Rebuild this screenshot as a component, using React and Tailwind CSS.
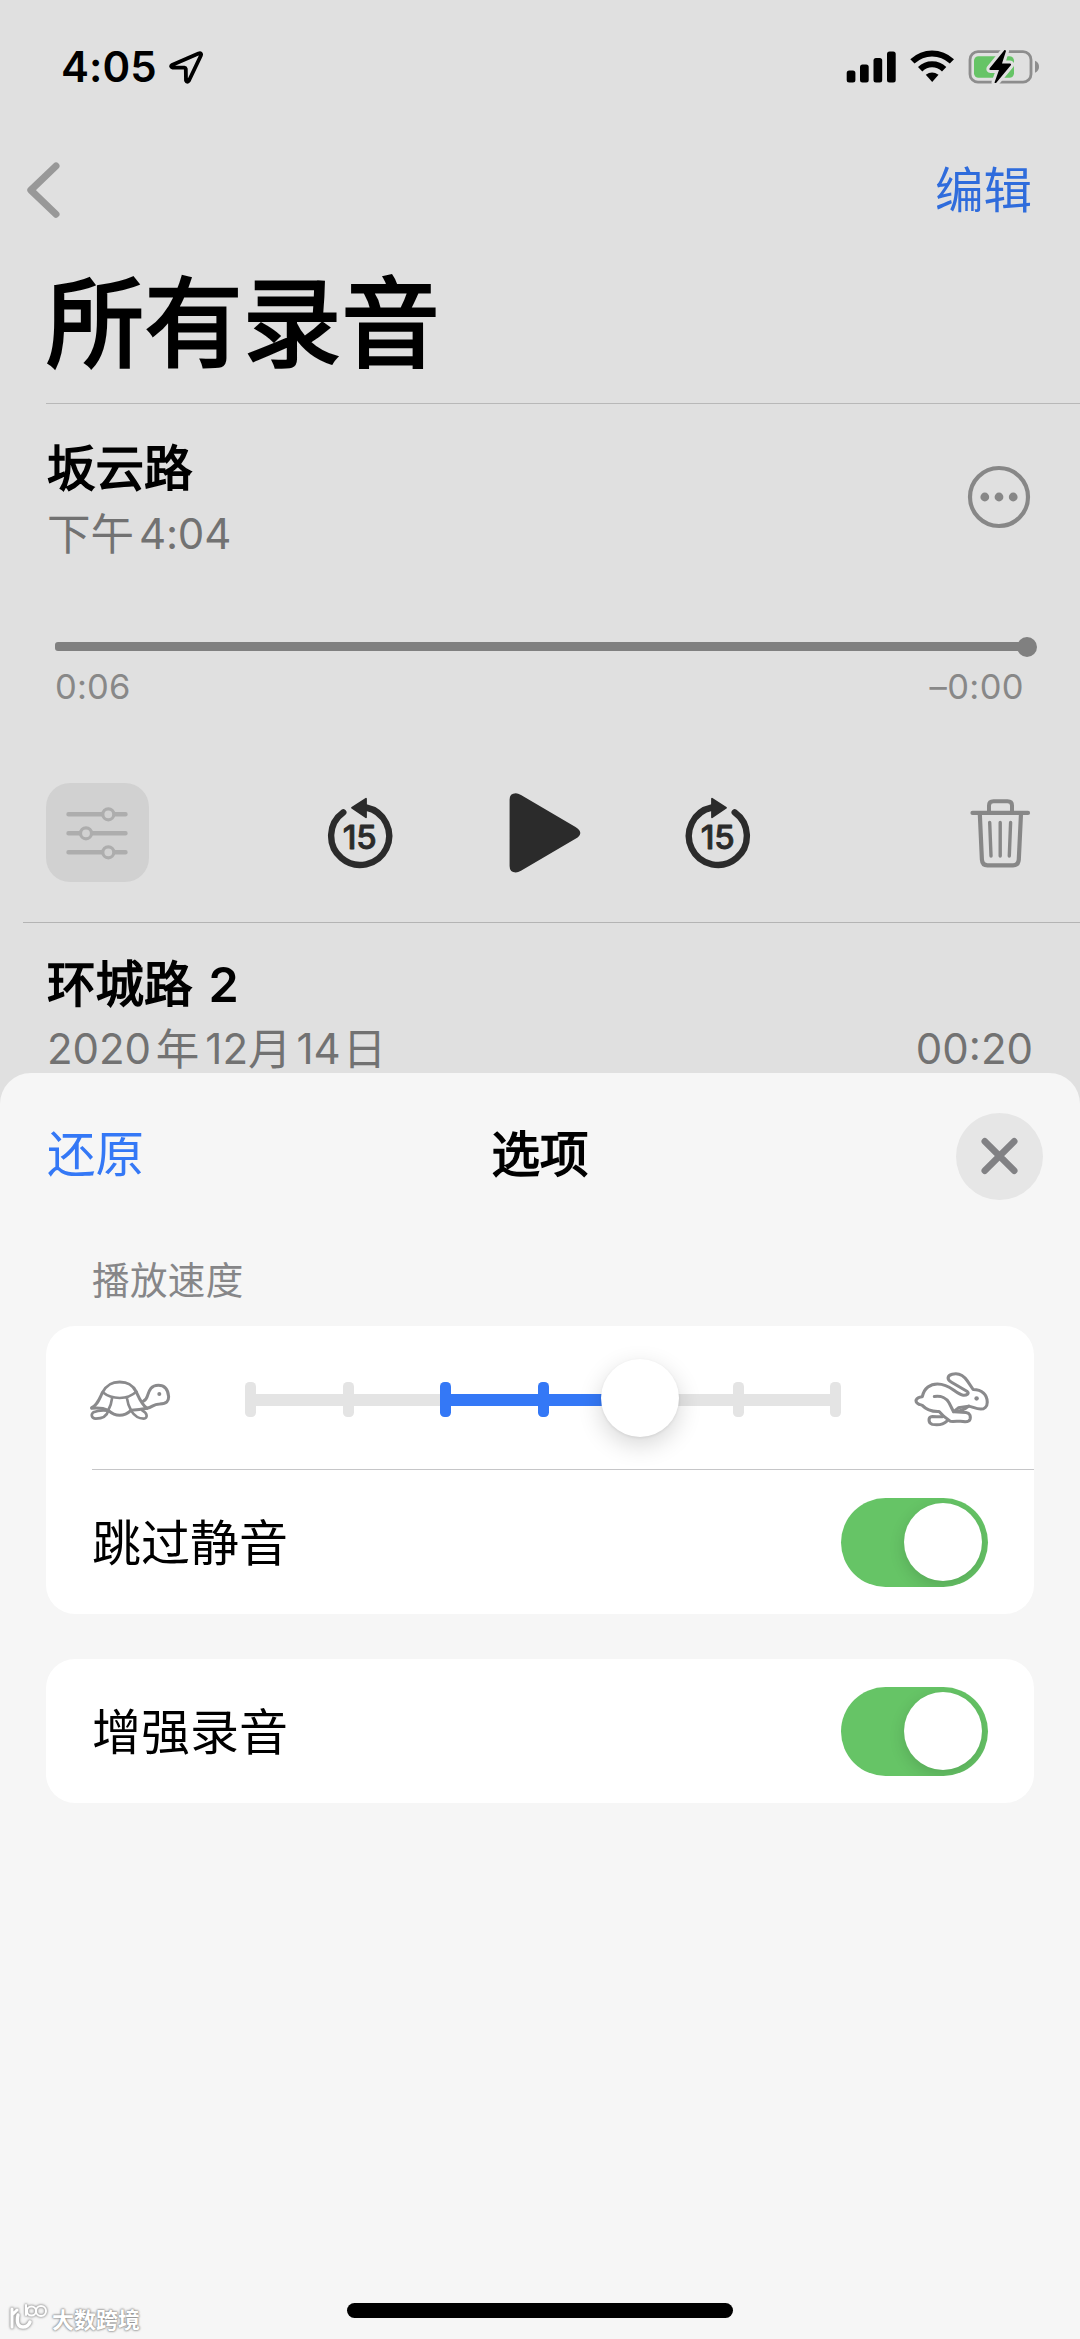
import React from "react";

function StatusBar() {
  return (
    <div className="flex h-[133px] items-center justify-between pl-[61px] pr-[40px]">
      <div className="flex items-center text-black">
        <span className="w-[108px] text-[42px] font-semibold leading-[60px] tracking-[0.100px]">4:05</span>
        <svg width="36" height="36" viewBox="168.500 48.500 36 36">
          <path
            d="M171.500 64.500 L198 53 Q201.500 52 200.300 55.200 L188.500 80 Q186.500 82.500 185.500 80 L185.300 68.500 Q185 67.200 184 67.200 L172 67 Q169.500 66 171.500 64.500 Z"
            fill="none"
            stroke="#000"
            strokeWidth="3.800"
            strokeLinejoin="round"
          />
        </svg>
      </div>
      <svg width="194" height="36" viewBox="846 48.500 194 36">
        <rect x="846.700" y="70" width="8.700" height="12" rx="2.500" />
        <rect x="860" y="64" width="8.700" height="18" rx="2.500" />
        <rect x="873.500" y="57.500" width="8.700" height="24.500" rx="2.500" />
        <rect x="887" y="51" width="8.700" height="31" rx="2.500" />
        <path d="M910.300 58.700 Q920 50 932 50 Q944.500 50 954 58.700 L949.800 63 Q942 56 932 56 Q922.500 56 914.500 63 Z" />
        <path d="M918 66.500 Q924 60.700 932 60.700 Q940.500 60.700 946.300 66.500 L942 71 Q937.500 66.800 932 66.800 Q926.800 66.800 922.300 71 Z" />
        <path d="M925.800 74.300 Q932 69.500 938.500 74.300 L932.200 81.500 Z" strokeLinejoin="round" />
        <rect x="970" y="51.200" width="61" height="30.500" rx="8" fill="none" stroke="#8d8d8d" strokeWidth="2.800" />
        <rect x="974" y="55.700" width="40" height="21.500" rx="4.500" fill="#66c466" />
        <path d="M1035 60.300 Q1039 62 1039 66.300 Q1039 70.500 1035 72.200 Z" fill="#8d8d8d" />
        <path
          d="M1004.500 49.500 L989.500 68 Q989 69.500 990.500 69.500 L999 69.500 L994.500 82 Q995 83 996.300 82.300 L1011 64.500 Q1011.500 63 1010 63 L1002 63 L1006 50.500 Q1005.500 49 1004.500 49.500 Z"
          stroke="#e0e0e0"
          strokeWidth="6"
          strokeLinejoin="round"
          paintOrder="stroke"
        />
      </svg>
    </div>
  );
}

function NavBar() {
  return (
    <div className="flex h-[114px] items-center justify-between pl-[26px] pr-[48px]">
      <svg width="36" height="60" viewBox="26 159.500 36 60">
        <path d="M56 165.500 L30.800 189.600 L56 213.700" fill="none" stroke="#989898" strokeWidth="7" strokeLinecap="round" strokeLinejoin="round" />
      </svg>
      <span className="pt-[2px] text-[48.500px] leading-[60px] text-[#2f6cdc]">编辑</span>
    </div>
  );
}

function SkipIcon({ forward }) {
  return (
    <svg className="shrink-0" width="68" height="74" viewBox="326 796 68 74">
      <g transform={forward ? "translate(720 0) scale(-1 1)" : undefined}>
        <path d="M343.300 812.300 A29 29 0 1 0 366 807.500" fill="none" stroke="#2b2b2b" strokeWidth="6.400" strokeLinecap="round" />
        <path d="M352 807.700 L366 798.800 L366 817.300 Z" fill="#2b2b2b" stroke="#2b2b2b" strokeWidth="1.800" strokeLinejoin="round" />
      </g>
      <text x="359.700" y="848.500" textAnchor="middle" fontSize="33" fontWeight="500" fill="#2b2b2b" stroke="#2b2b2b" strokeWidth="0.900" strokeLinejoin="round">
        15
      </text>
    </svg>
  );
}

function Controls() {
  return (
    <div className="mt-[77px] flex h-[99px] items-center pl-[46px] pr-[49px]">
      <div className="flex h-[99px] w-[103px] items-center justify-center rounded-[24px] bg-[#d1d1d1]">
        <svg width="64" height="54" viewBox="66 806 64 54" fill="none" stroke="#adadad">
          <path d="M68.500 814.300 H125.500 M68.500 833.300 H125.500 M68.500 852.300 H125.500" strokeWidth="4.400" strokeLinecap="round" />
          <g fill="#d1d1d1" strokeWidth="3.200">
            <circle cx="108.300" cy="814.300" r="5.500" />
            <circle cx="86" cy="833.300" r="5.500" />
            <circle cx="108.300" cy="852.300" r="5.500" />
          </g>
        </svg>
      </div>
      <div className="ml-[177px] flex items-center">
        <SkipIcon />
        <svg className="ml-[114px] mr-[103px]" width="73" height="82" viewBox="508 791.500 73 82">
          <path
            d="M509.600 799 Q509.600 792.700 515.800 792.700 Q518 792.700 521 794.500 L575.500 826.500 Q580.300 829.500 580.300 832.500 Q580.300 835.500 575.500 838.300 L521 870.300 Q518 872 515.800 872 Q509.600 872 509.600 865.500 Z"
            fill="#2b2b2b"
          />
        </svg>
        <SkipIcon forward />
      </div>
      <svg className="ml-auto" width="62" height="72" viewBox="969 796.500 62 72" fill="none" stroke="#878787" strokeLinecap="round" strokeLinejoin="round">
        <path d="M972.500 812.400 H1028" strokeWidth="4.200" />
        <path d="M989 811 V805 Q989 800.800 993.500 800.800 H1007.500 Q1012 800.800 1012 805 V811" strokeWidth="4" />
        <path d="M979.800 813 L981.900 859 Q982.300 864.800 987.500 864.800 H1013 Q1018.300 864.800 1018.800 859 L1021 813" strokeWidth="4.200" />
        <path d="M989.700 822 L991 855.500 M1000.200 822 V855.500 M1010.600 822 L1009.300 855.500" strokeWidth="3.400" />
      </svg>
    </div>
  );
}

function Recordings() {
  return (
    <div>
      <div className="ml-[46px] h-px bg-[#b8b8b8]" />
      <div className="flex items-start justify-between pl-[47px] pr-[49px] pt-[35px]">
        <div>
          <div className="text-[48.500px] leading-[60px] text-black [-webkit-text-stroke:1.600px_#000]">坂云路</div>
          <div className="flex text-[42px] leading-[70px] text-[#727272]">
            <span className="text-[43.500px]">下午</span>
            <span className="ml-[5px] tracking-[-0.200px]">4:04</span>
          </div>
        </div>
        <svg className="mt-[26px]" width="64" height="64" viewBox="0 0 64 64" fill="#878787">
          <circle cx="32" cy="32" r="29" fill="none" stroke="#878787" strokeWidth="4.200" />
          <circle cx="17.800" cy="32" r="4.400" />
          <circle cx="32" cy="32" r="4.400" />
          <circle cx="46.200" cy="32" r="4.400" />
        </svg>
      </div>
      <div className="ml-[55px] mr-[43px] mt-[67px] flex h-[21px] items-center">
        <div className="h-[9px] flex-1 rounded-l-[3px] bg-[#808080]" />
        <div className="-ml-1 size-[20px] rounded-full bg-[#808080]" />
      </div>
      <div className="mt-[9px] flex justify-between pl-[55px] pr-[56px] text-[34.500px] leading-[41px] text-[#888888]">
        <span className="tracking-[0.200px]">0:06</span>
        <span className="tracking-[0.400px]">–0:00</span>
      </div>
      <div className="-mt-px">
        <Controls />
      </div>
      <div className="ml-[23px] mt-[40px] h-px bg-[#b4b4b4]" />
      <div className="pl-[47px] pr-[47px] pt-[32px]">
        <div className="text-[48.500px] leading-[60px] text-black [-webkit-text-stroke:1.600px_#000]">
          环城路<span className="ml-[16px] font-semibold [-webkit-text-stroke:0]">2</span>
        </div>
        <div className="mt-[9px] flex justify-between text-[42px] leading-[50px] text-[#727272]">
          <span className="flex">
            <span className="tracking-[-0.100px]">2020</span>
            <span className="ml-[5px] text-[43.500px]">年</span>
            <span className="ml-[6px]">12</span>
            <span className="text-[43.500px]">月</span>
            <span className="ml-[5px]">14</span>
            <span className="ml-[2px] text-[43.500px]">日</span>
          </span>
          <span>00:20</span>
        </div>
      </div>
    </div>
  );
}

function Turtle() {
  return (
    <svg width="82" height="43.300" viewBox="88 170 246 130" fill="none" stroke="#8a8a8c" strokeWidth="9" strokeLinecap="round" strokeLinejoin="round">
      <path d="M96 259 C112 252 118 235 128 214 C141 190 156 182 180 182 C205 182 219 190 230 212 C239 232 246 250 262 261" />
      <path d="M96 261 Q126 258 146 267 Q162 282 180 282 Q198 282 214 267 Q240 266 262 261 C280 257 279 249 300 248 C322 246 327 240 327 226 C325 202 312 192 296 192 C275 192 269 206 264 222 Q260 236 250 240" />
      <path d="M129 213 Q150 230 180 230 Q210 230 230 211 M157 231 Q155 250 146 266 M202 231 Q205 252 214 267" strokeWidth="8" />
      <path d="M146 268 C141 287 122 292 108 292 C95 292 93 279 101 273 Q116 266 142 268" strokeWidth="8" />
      <path d="M214 268 C225 285 240 292 252 292 C265 291 264 275 248 268" strokeWidth="8" />
      <circle cx="299" cy="218" r="6" fill="#8a8a8c" stroke="none" />
    </svg>
  );
}

function Rabbit() {
  return (
    <svg width="77" height="57" viewBox="1084 154 224 172" preserveAspectRatio="none" fill="none" stroke="#8a8a8c" strokeWidth="9" strokeLinecap="round" strokeLinejoin="round">
      <path d="M1111 232 C1116 205 1135 193 1155 193 C1175 193 1190 202 1203 212 C1215 221 1222 226 1230 227 C1240 228 1249 222 1242 216 L1196 188 C1182 180 1183 168 1198 164 C1216 159 1232 169 1242 184 L1259 210 C1285 210 1300 226 1300 248 C1300 262 1291 269 1281 269 C1268 269 1257 262 1246 260 C1237 268 1226 276 1203 277 L1238 279 C1250 281 1252 290 1250 299 Q1248 307 1236 307 C1222 303 1206 308 1193 306 L1174 291 L1160 276 C1140 277 1122 270 1110 257 C1096 255 1092 247 1093 242 Q1097 233 1111 232 Z" />
      <path d="M1146 231 C1166 228 1182 236 1189 250 L1202 277 L1216 265 L1246 260" />
      <path d="M1170 292 Q1152 292 1140 291 C1127 292 1128 311 1140 315 C1156 318 1174 314 1184 304" />
      <circle cx="1269" cy="237" r="6.500" fill="#8a8a8c" stroke="none" />
    </svg>
  );
}

function SpeedSlider() {
  const ticks = [0, 1, 2, 3, 4, 5, 6];
  return (
    <div className="relative flex h-[78px] w-[596px] items-center">
      <div className="mx-[5px] flex h-[12px] flex-1 bg-[#e4e4e4]">
        <div className="ml-[195px] w-[195px] bg-[#3478f6]" />
      </div>
      <div className="absolute inset-0 flex items-center justify-between">
        {ticks.map((t) => (
          <div key={t} className={t === 2 || t === 3 ? "h-[35px] w-[11px] rounded-[4.500px] bg-[#3478f6]" : t === 4 ? "h-0 w-[11px]" : "h-[35px] w-[11px] rounded-[4.500px] bg-[#e4e4e4]"} />
        ))}
      </div>
      <div className="absolute left-[356px] top-[-2px] size-[78px] rounded-full bg-white shadow-[0_1px_3px_rgba(0,0,0,0.08),0_8px_24px_rgba(0,0,0,0.16)]" />
    </div>
  );
}

function Toggle() {
  return (
    <div className="flex h-[89px] w-[147px] items-center justify-end overflow-hidden rounded-full bg-[#66c466] pr-[6px]">
      <div className="size-[78px] rounded-full bg-white shadow-[0_5px_16px_rgba(0,0,0,0.14)]" />
    </div>
  );
}

function OptionRow({ label }) {
  return (
    <div className="flex h-[144px] items-center justify-between pl-[46px] pr-[46px]">
      <span className="pt-[3px] text-[49px] leading-[60px] text-black">{label}</span>
      <Toggle />
    </div>
  );
}

function OptionsSheet() {
  return (
    <div className="flex flex-1 flex-col rounded-t-[31px] bg-[#f6f6f6] px-[46px]">
      <div className="grid h-[166px] grid-cols-3 items-center">
        <span className="pb-[2px] pl-px text-[48.500px] leading-[60px] text-[#3478f6]">还原</span>
        <span className="pb-[2px] text-center text-[48.500px] leading-[60px] text-black [-webkit-text-stroke:1.600px_#000]">选项</span>
        <div className="-mr-[9px] flex size-[87px] items-center justify-center justify-self-end rounded-full bg-[#e6e6e6]">
          <svg width="40" height="40" viewBox="0.500 0 40 40">
            <path d="M5.300 5.300 L34.700 34.700 M34.700 5.300 L5.300 34.700" stroke="#818184" strokeWidth="6.600" strokeLinecap="round" />
          </svg>
        </div>
      </div>
      <div className="mt-[19px] pl-[46px] text-[37.500px] leading-[46px] tracking-[0.400px] text-[#868688]">播放速度</div>
      <div className="mt-[22px] h-[288px] rounded-[29px] bg-white">
        <div className="flex h-[143px] items-center pl-[43px] pt-[4px]">
          <Turtle />
          <div className="ml-[74px] mr-[72px]">
            <SpeedSlider />
          </div>
          <Rabbit />
        </div>
        <div className="ml-[46px] h-px bg-[#c6c6c8]" />
        <OptionRow label="跳过静音" />
      </div>
      <div className="mt-[45px] h-[144px] rounded-[29px] bg-white">
        <OptionRow label="增强录音" />
      </div>
      <div className="-ml-[38px] mb-[5px] mt-auto flex h-[34px] items-center">
        <svg width="42" height="30" viewBox="8 2303 42 30" fill="none" stroke="#fff" strokeLinecap="round" strokeLinejoin="round" className="[filter:drop-shadow(0_0_1px_#999)_drop-shadow(0_0_1px_#aaa)]">
          <path d="M12 2310 V2328 M12 2316 L17 2311" strokeWidth="3" />
          <path d="M18 2316 C16 2325 19 2328 23 2328 Q28 2328 30 2323" strokeWidth="3.400" />
          <path d="M26 2306 V2316" strokeWidth="2" />
          <circle cx="31.500" cy="2312" r="4.500" strokeWidth="2" />
          <circle cx="41" cy="2312" r="5" strokeWidth="2" />
        </svg>
        <span className="ml-[2px] mt-[5px] text-[22px] font-bold leading-[28px] text-white [text-shadow:0_0_2px_#888,0_0_2px_#999,0_0_3px_#aaa]">大数跨境</span>
        <div className="-mt-[14px] ml-[207px] h-[15px] w-[386px] rounded-full bg-black" />
      </div>
    </div>
  );
}

export default function App() {
  return (
    <div className="flex h-[2339px] w-[1080px] flex-col overflow-hidden bg-[#e0e0e0] font-['Inter','Noto_Sans_CJK_SC',sans-serif]" lang="zh-CN">
      <div className="h-[1073px] shrink-0">
        <StatusBar />
        <NavBar />
        <h1 className="mb-[3px] h-[153px] pl-[46px] text-[98px] font-normal leading-[153px] tracking-[0.500px] text-black [-webkit-text-stroke:2.800px_#000]">所有录音</h1>
        <Recordings />
      </div>
      <OptionsSheet />
    </div>
  );
}
